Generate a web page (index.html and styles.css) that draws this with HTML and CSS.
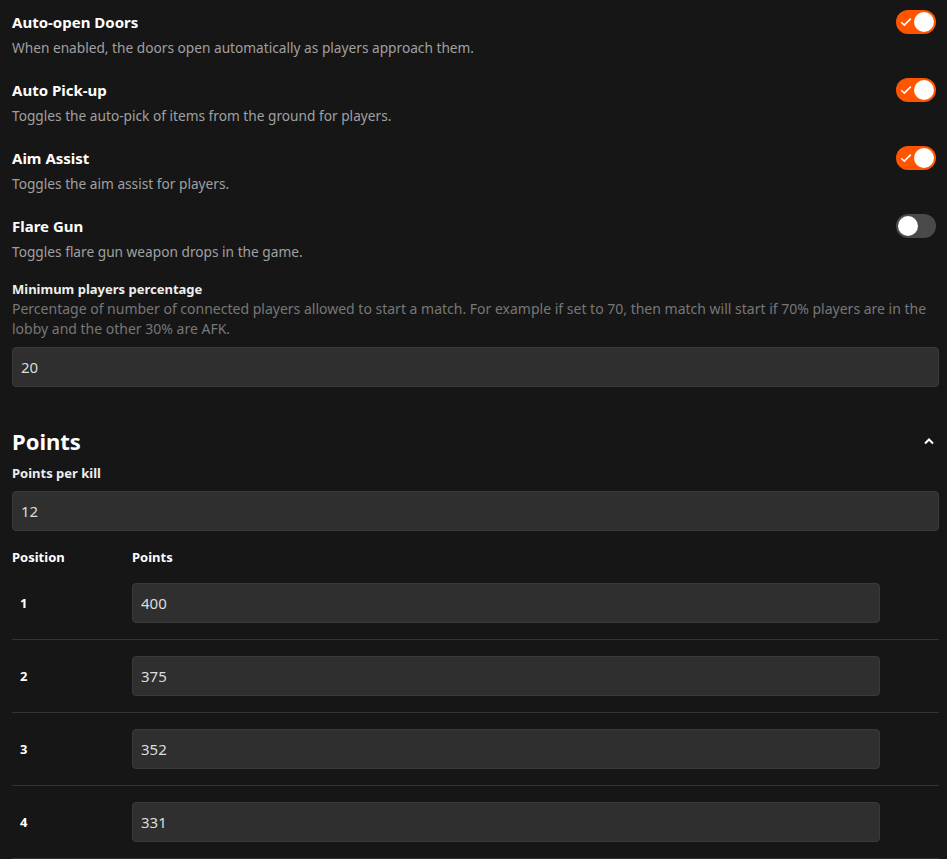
FILE: index.html
```html
<!DOCTYPE html>
<html lang="en">
<head>
  <meta charset="UTF-8">
  <meta name="viewport" content="width=device-width, initial-scale=1.0">
  <title>Match Settings</title>
  <link rel="stylesheet" href="styles.css">
</head>
<body>

  <div class="settings">
    <div class="option">
      <div class="option-head">
        <span class="option-title">Auto-open Doors</span>
        <span class="toggle on"><svg class="check" viewBox="0 0 10 8"><path d="M1 4.2 L3.6 6.6 L9 1.2"/></svg><span class="knob"></span></span>
      </div>
      <p class="option-desc">When enabled, the doors open automatically as players approach them.</p>
    </div>

    <div class="option">
      <div class="option-head">
        <span class="option-title">Auto Pick-up</span>
        <span class="toggle on"><svg class="check" viewBox="0 0 10 8"><path d="M1 4.2 L3.6 6.6 L9 1.2"/></svg><span class="knob"></span></span>
      </div>
      <p class="option-desc">Toggles the auto-pick of items from the ground for players.</p>
    </div>

    <div class="option">
      <div class="option-head">
        <span class="option-title">Aim Assist</span>
        <span class="toggle on"><svg class="check" viewBox="0 0 10 8"><path d="M1 4.2 L3.6 6.6 L9 1.2"/></svg><span class="knob"></span></span>
      </div>
      <p class="option-desc">Toggles the aim assist for players.</p>
    </div>

    <div class="option last">
      <div class="option-head">
        <span class="option-title">Flare Gun</span>
        <span class="toggle"><span class="knob"></span></span>
      </div>
      <p class="option-desc">Toggles flare gun weapon drops in the game.</p>
    </div>

    <div class="field">
      <label class="field-label">Minimum players percentage</label>
      <p class="field-help">Percentage of number of connected players allowed to start a match. For example if set to 70, then match will start if 70% players are in the lobby and the other 30% are AFK.</p>
      <input class="text-input" type="text" value="20">
    </div>

    <div class="section-head">
      <h2>Points</h2>
      <svg class="chevron" viewBox="0 0 12 8"><path d="M2 6.5 L6 2.5 L10 6.5"/></svg>
    </div>

    <div class="field">
      <label class="field-label">Points per kill</label>
      <input class="text-input spaced" type="text" value="12">
    </div>

    <div class="points-table">
      <div class="points-row head">
        <span>Position</span>
        <span>Points</span>
      </div>
      <div class="points-row">
        <span class="pos">1</span>
        <input class="text-input" type="text" value="400">
      </div>
      <div class="points-row">
        <span class="pos">2</span>
        <input class="text-input" type="text" value="375">
      </div>
      <div class="points-row">
        <span class="pos">3</span>
        <input class="text-input" type="text" value="352">
      </div>
      <div class="points-row">
        <span class="pos">4</span>
        <input class="text-input" type="text" value="331">
      </div>
    </div>
  </div>

</body>
</html>
```

FILE: styles.css
```css
body {
  margin: 0;
  background-color: #161616;
  color: #fff;
  font-family: "Noto Sans", sans-serif;
}

.settings {
  padding: 12px 8px 0 12px;
}

.option {
  height: 68px;
}

.option-head {
  display: flex;
  justify-content: space-between;
  align-items: center;
  height: 20px;
}

.option-title {
  font-size: 15px;
  font-weight: bold;
}

.option-desc {
  margin: 6px 0 0;
  font-size: 13.7px;
  line-height: 20px;
  color: #a0a0a0;
}

.option.last {
  height: 64px;
}

.toggle {
  position: relative;
  width: 40px;
  height: 24px;
  margin-right: 3px;
  border-radius: 12px;
  background-color: #4a4a4a;
}

.toggle.on {
  background-color: #ff5500;
}

.toggle .knob {
  position: absolute;
  top: 2px;
  left: 2px;
  width: 20px;
  height: 20px;
  border-radius: 50%;
  background-color: #fff;
}

.toggle.on .knob {
  left: 18px;
}

.toggle .check {
  position: absolute;
  left: 4px;
  top: 7px;
  width: 12px;
  height: 10px;
}

.check path {
  fill: none;
  stroke: #fff;
  stroke-width: 1.3;
}

.field-label {
  display: block;
  font-size: 13px;
  font-weight: bold;
  line-height: 18px;
  color: #eee;
}

.field-help {
  margin: 1px 0 0;
  font-size: 14px;
  line-height: 20px;
  color: #777;
}

.text-input {
  display: block;
  box-sizing: border-box;
  width: 100%;
  height: 40px;
  margin-top: 8px;
  padding: 0 8px;
  font-family: "Noto Sans", sans-serif;
  font-size: 15px;
  color: #ddd;
  background-color: #2f2f2f;
  border: 1px solid #3a3a3a;
  border-radius: 4px;
}

.text-input.spaced {
  margin-top: 9px;
}

.section-head {
  display: flex;
  justify-content: space-between;
  align-items: center;
  margin: 40px 0 9px;
}

.section-head h2 {
  margin: 0;
  font-size: 22px;
  line-height: 28px;
}

.chevron {
  width: 12px;
  height: 8px;
  margin-right: 4px;
}

.chevron path {
  fill: none;
  stroke: #fff;
  stroke-width: 2;
}

.points-table {
  margin-top: 17px;
}

.points-row {
  display: grid;
  grid-template-columns: 120px 748px;
  align-items: center;
  padding: 16px 0;
  border-bottom: 1px solid #333;
  font-size: 13px;
  font-weight: bold;
}

.points-row .text-input {
  margin-top: 0;
  font-weight: normal;
}

.points-row.head {
  padding: 0 0 1px;
  line-height: 18px;
  border-bottom: none;
}

.points-row .pos {
  padding-left: 8px;
}
```
